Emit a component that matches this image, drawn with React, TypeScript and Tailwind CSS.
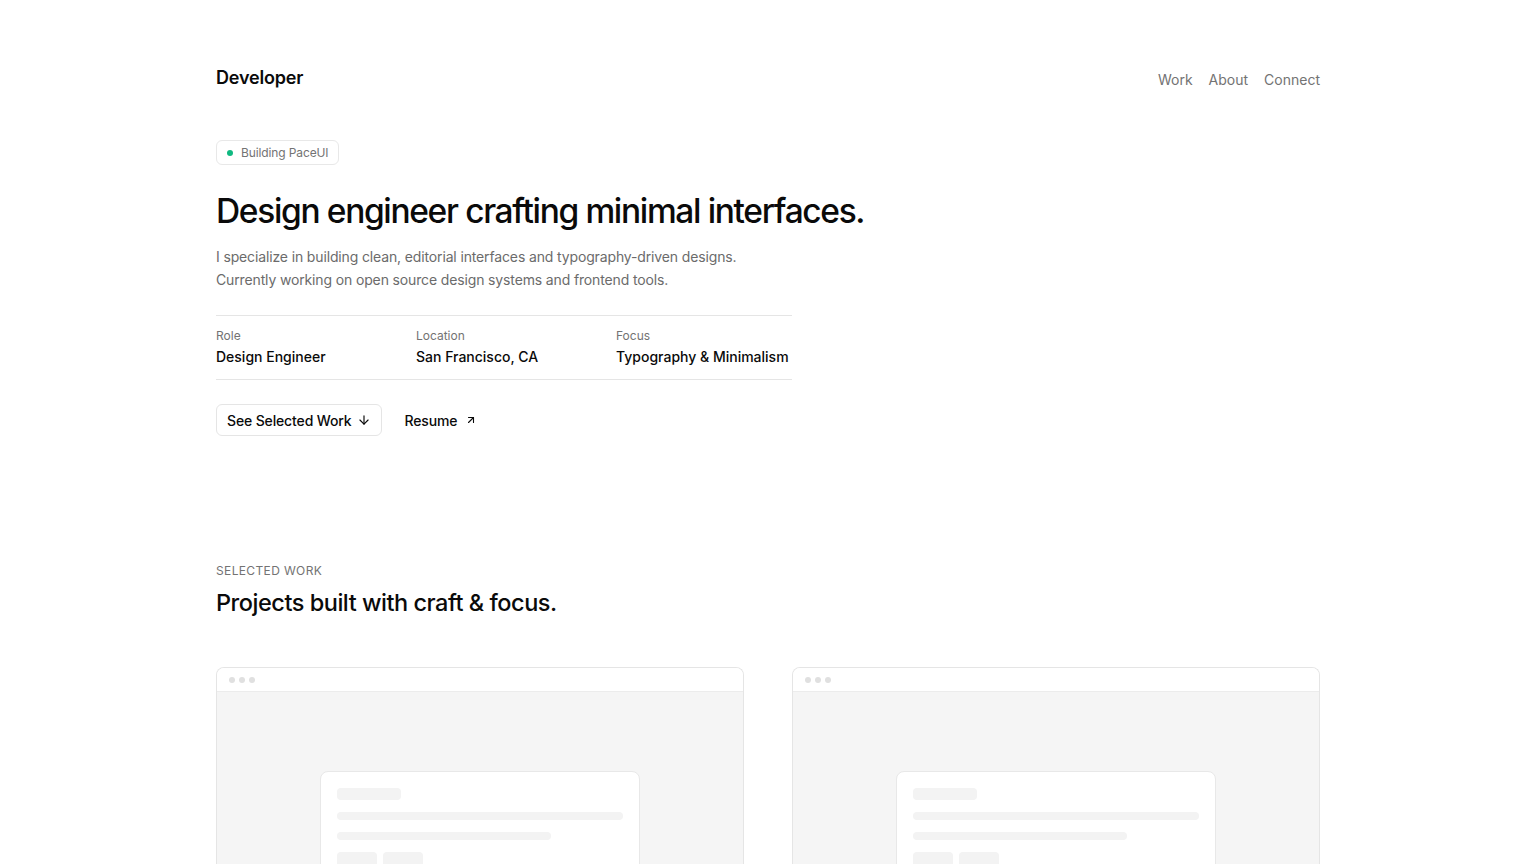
import React from "react";

function ArrowDown() {
  return (
    <svg width="14" height="14" viewBox="0 0 24 24" fill="none" stroke="currentColor" strokeWidth="2" strokeLinecap="round" strokeLinejoin="round">
      <path d="M12 5v14" />
      <path d="m19 12-7 7-7-7" />
    </svg>
  );
}

function ArrowUpRight() {
  return (
    <svg width="12" height="12" viewBox="0 0 24 24" fill="none" stroke="currentColor" strokeWidth="2.2" strokeLinecap="round" strokeLinejoin="round">
      <path d="M7 17 17 7" />
      <path d="M7 7h10v10" />
    </svg>
  );
}

function ProjectCard() {
  return (
    <div className="rounded-t-lg border border-[#e5e5e5] border-b-0 overflow-hidden bg-white">
      <div className="h-6 flex items-center gap-1 px-3 border-b border-[#ececec] bg-white">
        <span className="w-1.5 h-1.5 rounded-full bg-[#e0e0e0]" />
        <span className="w-1.5 h-1.5 rounded-full bg-[#e0e0e0]" />
        <span className="w-1.5 h-1.5 rounded-full bg-[#e0e0e0]" />
      </div>
      <div className="bg-[#f5f5f5] h-[200px] flex justify-center pt-[79px]">
        <div className="w-[320px] h-[200px] bg-white rounded-lg border border-[#e8e8e8] px-4 pt-4">
          <div className="w-16 h-3 bg-[#f3f3f3] rounded-sm" />
          <div className="mt-3 h-2 bg-[#f3f3f3] rounded-sm" />
          <div className="mt-3 h-2 w-[214px] bg-[#f3f3f3] rounded-sm" />
          <div className="mt-3 flex gap-1.5">
            <div className="w-10 h-4 bg-[#f3f3f3] rounded-sm" />
            <div className="w-10 h-4 bg-[#f3f3f3] rounded-sm" />
          </div>
        </div>
      </div>
    </div>
  );
}

export default function App() {
  return (
    <div className="min-h-screen bg-white text-[#0a0a0a] font-['Inter',sans-serif] antialiased">
      <div className="max-w-6xl mx-auto px-6">
        <header className="pt-16 flex items-center justify-between">
          <div className="text-[18px] leading-7 font-semibold tracking-[-0.01em]">Developer</div>
          <nav className="flex items-center gap-4 pt-[3px] text-[14px] leading-5 text-[#737373]">
            <a>Work</a>
            <a>About</a>
            <a>Connect</a>
          </nav>
        </header>

        <section className="mt-12">
          <div className="flex w-fit items-center gap-2 h-[25px] px-2.5 rounded-md border border-[#e8e8e8] text-[12px] leading-4 text-[#737373] tracking-[-0.01em]">
            <span className="w-1.5 h-1.5 rounded-full bg-[#10b981]" />
            Building PaceUI
          </div>
          <h1 className="mt-6 text-[33.5px] leading-[44px] font-medium tracking-[-0.04em] text-[#0a0a0a]">
            Design engineer crafting minimal interfaces.
          </h1>
          <p className="mt-3 text-[14px] leading-[23px] tracking-[-0.01em] text-[#6b6b6b]">
            I specialize in building clean, editorial interfaces and typography-driven designs.
            <br />
            Currently working on open source design systems and frontend tools.
          </p>
          <div className="mt-6 w-[576px] border-y border-[#e5e5e5] pt-3 pb-3 grid grid-cols-[200px_200px_1fr]">
            <div>
              <div className="text-[12px] leading-4 text-[#737373]">Role</div>
              <div className="mt-[3px] text-[14px] leading-5 font-medium">Design Engineer</div>
            </div>
            <div>
              <div className="text-[12px] leading-4 text-[#737373]">Location</div>
              <div className="mt-[3px] text-[14px] leading-5 font-medium">San Francisco, CA</div>
            </div>
            <div>
              <div className="text-[12px] leading-4 text-[#737373]">Focus</div>
              <div className="mt-[3px] text-[14px] leading-5 font-medium whitespace-nowrap">Typography &amp; Minimalism</div>
            </div>
          </div>
          <div className="mt-6 flex items-center gap-3">
            <button className="flex items-center gap-1.5 h-8 px-2.5 rounded-md border border-[#e5e5e5] text-[14px] font-medium tracking-[-0.01em]">
              See Selected Work
              <ArrowDown />
            </button>
            <button className="flex items-center gap-2 h-8 px-2.5 text-[14px] font-medium tracking-[-0.01em]">
              Resume
              <ArrowUpRight />
            </button>
          </div>
        </section>

        <section className="mt-[127px]">
          <div className="text-[12px] leading-4 uppercase tracking-[0.03em] text-[#737373]">Selected Work</div>
          <h2 className="mt-2 text-[23.5px] leading-8 font-medium tracking-[-0.02em]">Projects built with craft &amp; focus.</h2>
          <div className="mt-12 grid grid-cols-2 gap-12">
            <ProjectCard />
            <ProjectCard />
          </div>
        </section>
      </div>
    </div>
  );
}
